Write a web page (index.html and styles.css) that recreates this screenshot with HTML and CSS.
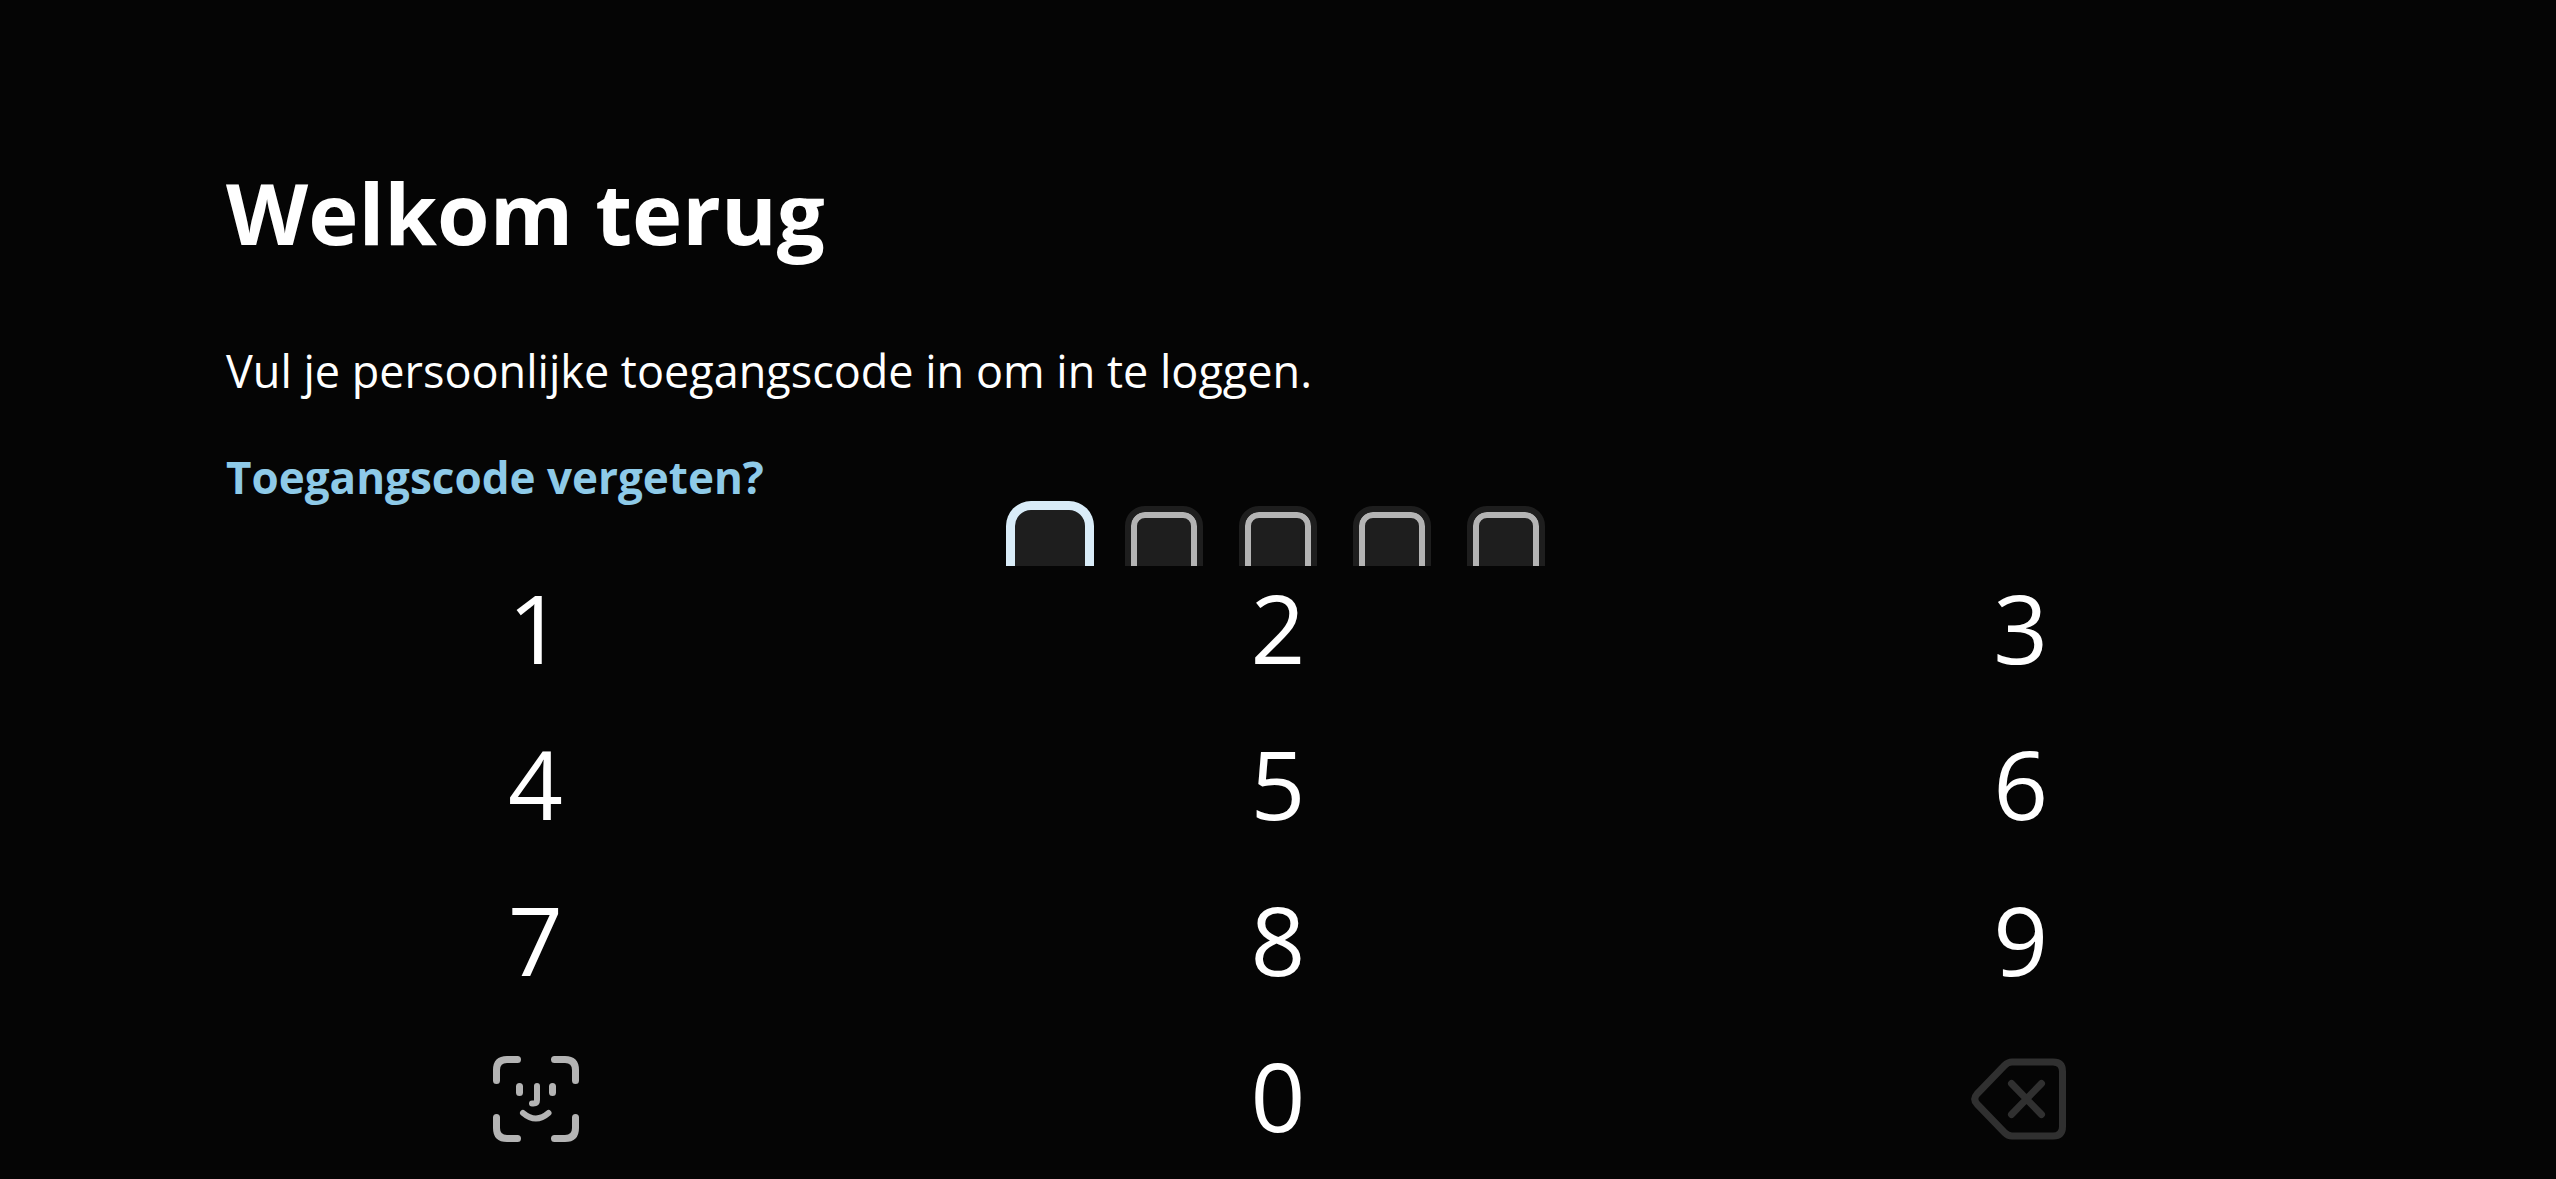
FILE: index.html
```html
<!DOCTYPE html>
<html lang="nl">
<head>
<meta charset="utf-8">
<meta name="viewport" content="width=device-width, initial-scale=1">
<title>Welkom terug</title>
<link rel="stylesheet" href="styles.css">
</head>
<body>
<main class="login">
  <header class="intro">
    <h1 class="title">Welkom terug</h1>
    <p class="lead">Vul je persoonlijke toegangscode in om in te loggen.</p>
    <a class="forgot" href="#">Toegangscode vergeten?</a>
  </header>
  <form class="code" aria-label="Toegangscode">
    <input class="pin pin-active" type="password" maxlength="1" aria-label="Cijfer 1">
    <input class="pin" type="password" maxlength="1" aria-label="Cijfer 2">
    <input class="pin" type="password" maxlength="1" aria-label="Cijfer 3">
    <input class="pin" type="password" maxlength="1" aria-label="Cijfer 4">
    <input class="pin" type="password" maxlength="1" aria-label="Cijfer 5">
  </form>
  <div class="keypad">
    <button class="key" type="button">1</button>
    <button class="key" type="button">2</button>
    <button class="key" type="button">3</button>
    <button class="key" type="button">4</button>
    <button class="key" type="button">5</button>
    <button class="key" type="button">6</button>
    <button class="key" type="button">7</button>
    <button class="key" type="button">8</button>
    <button class="key" type="button">9</button>
    <button class="key key-face" type="button" aria-label="Inloggen met Face ID">
      <svg class="icon" width="86" height="86" viewBox="0 0 86 86" aria-hidden="true">
        <path d="M3.5 24.5V14Q3.500 3.500 14 3.500H24.500M61.500 3.500H72Q82.500 3.500 82.500 14V24.500M82.500 61.500V72Q82.500 82.500 72 82.500H61.500M24.500 82.500H14Q3.500 82.500 3.500 72V61.500M26.500 30.500V36.500M59.500 30.500V36.500"/>
        <path class="fine" d="M44 30V44Q44 47.500 40.500 47.500H39M30 57Q43 68 55.500 57"/>
      </svg>
    </button>
    <button class="key" type="button">0</button>
    <button class="key key-delete" type="button" aria-label="Wissen" disabled>
      <svg class="icon" width="100" height="82" viewBox="0 0 100 82" aria-hidden="true">
        <path d="M41 4H82Q91.500 4 91.500 13.500V68.500Q91.500 78 82 78H41Q37 78 33.500 74.500L6 46Q1.500 41 6 36L33.500 7.500Q37 4 41 4ZM40.500 25.500L70.500 56.500M70.500 25.500L40.500 56.500"/>
      </svg>
    </button>
  </div>
</main>
</body>
</html>
```
FILE: styles.css
```css
* {
  box-sizing: border-box;
}

body {
  margin: 0;
  min-height: 100vh;
  background: #050505;
  color: #fff;
  font-family: "Open Sans", "Noto Sans", sans-serif;
}

.intro {
  display: flex;
  flex-direction: column;
  align-items: flex-start;
  padding: 160px 226px 0;
}

.title {
  margin: 0;
  font-size: 85px;
  line-height: 104px;
  font-weight: 700;
}

.lead {
  margin: 83px 0 58px;
  font-size: 45px;
  line-height: 48px;
}

.forgot {
  color: #8ecae8;
  font-size: 44px;
  line-height: 48px;
  font-weight: 700;
  text-decoration: none;
}

.code {
  display: flex;
  justify-content: center;
  gap: 36px;
  height: 65px;
  padding-top: 5px;
  overflow: hidden;
}

.pin {
  flex: none;
  width: 78px;
  height: 96px;
  padding: 0;
  border: 6px solid #1e1e1e;
  border-radius: 20px;
  background: #1e1e1e;
  box-shadow: inset 0 0 0 6px #b4b4b4;
  color: #fff;
  font: inherit;
  font-size: 45px;
  text-align: center;
}

.pin-active {
  border: 4px solid #d9ecf8;
  box-shadow: 0 0 0 5px #d9ecf8;
}

.keypad {
  display: grid;
  grid-template-columns: repeat(3, 1fr);
  grid-auto-rows: 128px;
  row-gap: 28px;
  padding: 0 164px 17px;
}

.key {
  display: flex;
  align-items: center;
  justify-content: center;
  padding: 0 0 6px;
  border: 0;
  background: none;
  color: inherit;
  font: inherit;
  font-size: 96px;
  line-height: 120px;
}

.key-face {
  padding: 2px 0 0 2px;
  color: #b4b4b4;
}

.key-delete {
  padding: 2px 0 0;
  color: #303030;
}

.icon {
  fill: none;
  stroke: currentColor;
  stroke-width: 7;
  stroke-linecap: round;
  stroke-linejoin: round;
}

.fine {
  stroke-width: 6;
}
```
